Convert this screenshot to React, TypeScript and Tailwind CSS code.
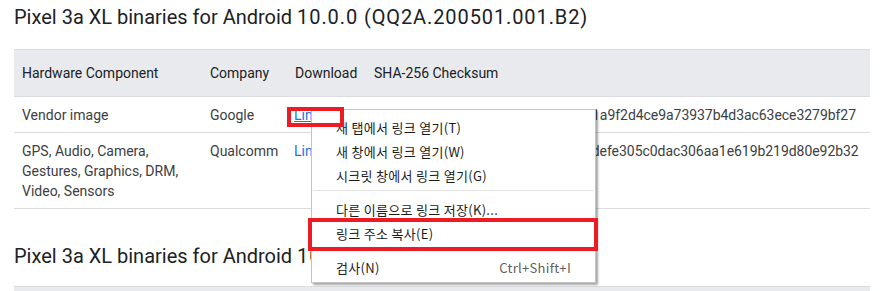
import React from "react";

const rows = [
  {
    hw: ["Vendor image"],
    company: "Google",
    underline: true,
    hash: "8d3a0b5c7e91f24a6b0c3d8e5f17a1a9f2d4ce9a73937b4d3ac63ece3279bf27",
    h: "h-[36px]",
  },
  {
    hw: ["GPS, Audio, Camera,", "Gestures, Graphics, DRM,", "Video, Sensors"],
    company: "Qualcomm",
    underline: false,
    hash: "4b7e2c90a1d5f38e6c2b9a0d47f1cdefe305c0dac306aa1e619b219d80e92b32",
    h: "h-[76px]",
  },
];

function MenuItem({ label, shortcut }: { label: string; shortcut?: string }) {
  return (
    <div className="flex h-[24px] items-center justify-between pl-[24px] pr-[24px] text-[13px] text-[#1b1b1b]">
      <span className="tracking-[0.3px]">{label}</span>
      {shortcut && <span className="text-[#5f5f5f] tracking-[0.3px]">{shortcut}</span>}
    </div>
  );
}

function Sep() {
  return <div className="mx-[1px] mt-[2px] mb-[7px] h-px bg-[#e3e3e3]" />;
}

function Title({ code, className }: { code: string; className?: string }) {
  return (
    <h2
      className={`h-[32px] text-[20px] leading-[32px] text-[#202124] ${className ?? ""}`}
      style={{ fontFamily: "Roboto, 'Open Sans', sans-serif" }}
    >
      Pixel 3a XL binaries for Android{" "}
      <span className="tracking-[0.9px]">10.0.0 ({code})</span>
    </h2>
  );
}

export default function App() {
  return (
    <div
      className="relative h-[291px] w-[886px] overflow-hidden bg-white pl-[14px]"
      style={{ fontFamily: "Roboto, 'Noto Sans', sans-serif" }}
    >
      <Title code="QQ2A.200501.001.B2" className="pt-px" />
      <div className="mt-[17px] w-[856px] text-[14px] leading-[20px]">
        <div className="grid h-[48px] grid-cols-[188px_85px_79px_1fr] items-center border-y border-[#dadce0] bg-[#e8eaed] text-[#202124]">
          <div className="pl-[8px]">Hardware Component</div>
          <div className="pl-[8px]">Company</div>
          <div className="pl-[8px]">Download</div>
          <div className="pl-[8px]">SHA-256 Checksum</div>
        </div>
        {rows.map((r, i) => (
          <div
            key={i}
            className={`grid ${r.h} grid-cols-[188px_85px_79px_1fr] items-start border-b border-[#dadce0] pt-[8px] text-[#3c4043]`}
          >
            <div className="pl-[8px]">
              {r.hw.map((l, j) => (
                <div key={j}>{l}</div>
              ))}
            </div>
            <div className="pl-[8px]">{r.company}</div>
            <div className="pl-[7px]">
              <span className={`text-[#1a73e8] ${r.underline ? "underline" : ""}`}>Link</span>
            </div>
            <div className="whitespace-nowrap pl-[8px] tracking-[-0.05px]">{r.hash}</div>
          </div>
        ))}
      </div>
      <Title code="QQ2A.200405.005" className="mt-[31px]" />
      <div className="mt-[14px] h-[20px] w-[856px] border-t border-[#dadce0] bg-[#e8eaed]" />

      {/* context menu */}
      <div
        className="absolute left-[311px] top-[109px] h-[174px] w-[285px] border border-[#c4c4c4] bg-white pt-[6px] shadow-[2px_2px_2px_rgba(0,0,0,0.35)]"
        style={{ fontFamily: "'Noto Sans CJK KR', 'Noto Sans', sans-serif" }}
      >
        <MenuItem label="새 탭에서 링크 열기(T)" />
        <MenuItem label="새 창에서 링크 열기(W)" />
        <MenuItem label="시크릿 창에서 링크 열기(G)" />
        <Sep />
        <MenuItem label="다른 이름으로 링크 저장(K)..." />
        <MenuItem label="링크 주소 복사(E)" />
        <Sep />
        <MenuItem label="검사(N)" shortcut="Ctrl+Shift+I" />
      </div>

      {/* red highlight boxes */}
      <div className="absolute left-[287px] top-[107px] h-[20px] w-[57px] border-[4px] border-[#ed1c24]" />
      <div className="absolute left-[308px] top-[218px] h-[33px] w-[290px] border-[4px] border-[#ed1c24]" />
    </div>
  );
}
